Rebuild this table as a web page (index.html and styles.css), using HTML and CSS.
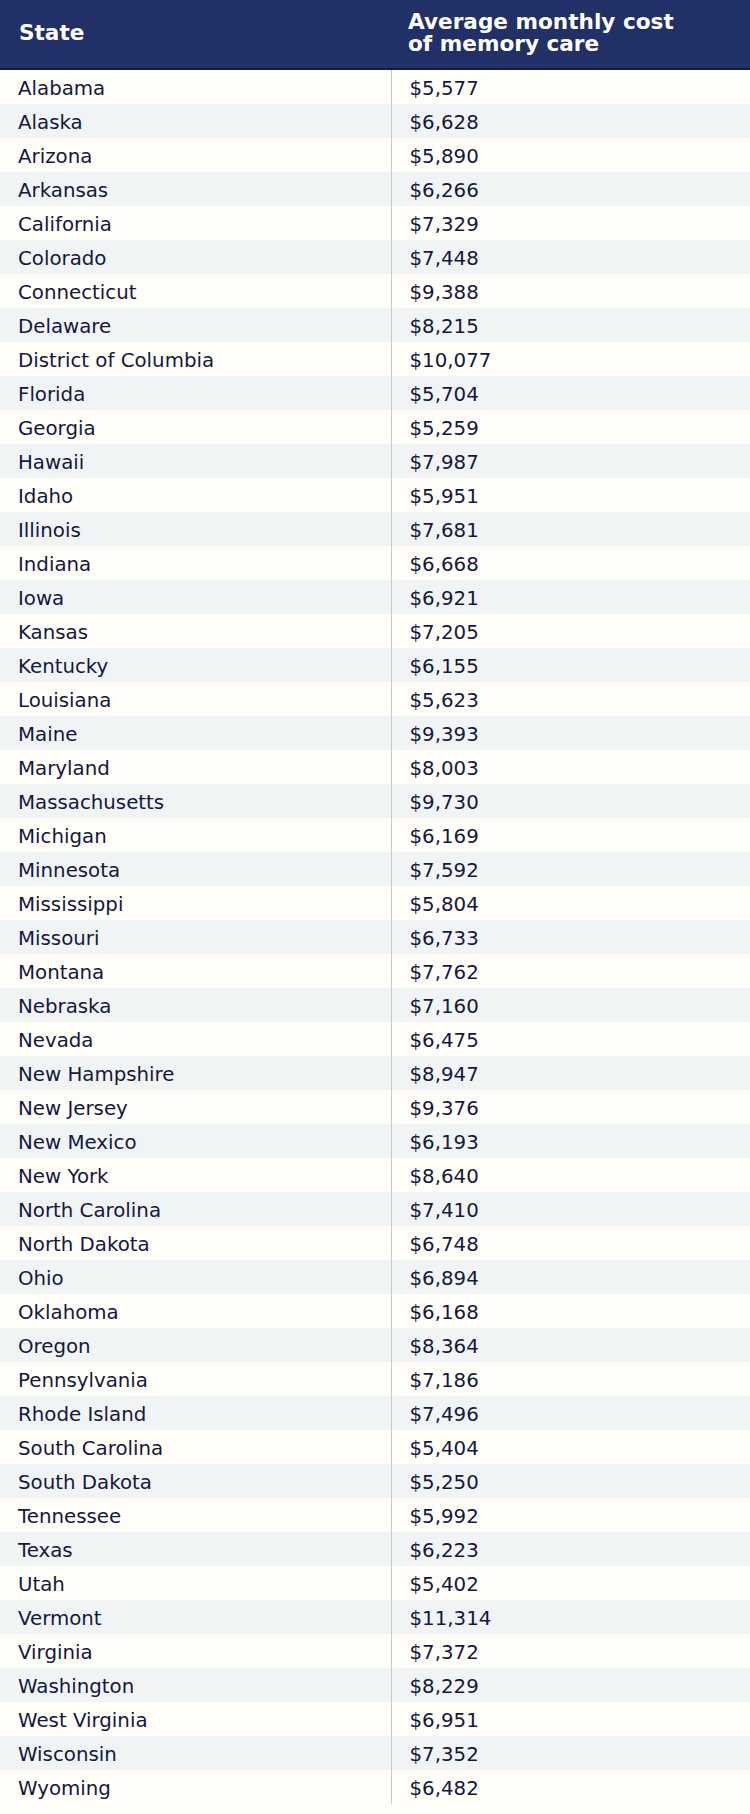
FILE: index.html
```html
<!DOCTYPE html>
<html lang="en">
<head>
<meta charset="utf-8">
<title>Average monthly cost of memory care by state</title>
<link rel="stylesheet" href="styles.css">
</head>
<body>
<table class="cost-table">
  <thead>
    <tr>
      <th class="col-state">State</th>
      <th class="col-cost">Average monthly cost<br>of memory care</th>
    </tr>
  </thead>
  <tbody>
    <tr><td>Alabama</td><td>$5,577</td></tr>
    <tr><td>Alaska</td><td>$6,628</td></tr>
    <tr><td>Arizona</td><td>$5,890</td></tr>
    <tr><td>Arkansas</td><td>$6,266</td></tr>
    <tr><td>California</td><td>$7,329</td></tr>
    <tr><td>Colorado</td><td>$7,448</td></tr>
    <tr><td>Connecticut</td><td>$9,388</td></tr>
    <tr><td>Delaware</td><td>$8,215</td></tr>
    <tr><td>District of Columbia</td><td>$10,077</td></tr>
    <tr><td>Florida</td><td>$5,704</td></tr>
    <tr><td>Georgia</td><td>$5,259</td></tr>
    <tr><td>Hawaii</td><td>$7,987</td></tr>
    <tr><td>Idaho</td><td>$5,951</td></tr>
    <tr><td>Illinois</td><td>$7,681</td></tr>
    <tr><td>Indiana</td><td>$6,668</td></tr>
    <tr><td>Iowa</td><td>$6,921</td></tr>
    <tr><td>Kansas</td><td>$7,205</td></tr>
    <tr><td>Kentucky</td><td>$6,155</td></tr>
    <tr><td>Louisiana</td><td>$5,623</td></tr>
    <tr><td>Maine</td><td>$9,393</td></tr>
    <tr><td>Maryland</td><td>$8,003</td></tr>
    <tr><td>Massachusetts</td><td>$9,730</td></tr>
    <tr><td>Michigan</td><td>$6,169</td></tr>
    <tr><td>Minnesota</td><td>$7,592</td></tr>
    <tr><td>Mississippi</td><td>$5,804</td></tr>
    <tr><td>Missouri</td><td>$6,733</td></tr>
    <tr><td>Montana</td><td>$7,762</td></tr>
    <tr><td>Nebraska</td><td>$7,160</td></tr>
    <tr><td>Nevada</td><td>$6,475</td></tr>
    <tr><td>New Hampshire</td><td>$8,947</td></tr>
    <tr><td>New Jersey</td><td>$9,376</td></tr>
    <tr><td>New Mexico</td><td>$6,193</td></tr>
    <tr><td>New York</td><td>$8,640</td></tr>
    <tr><td>North Carolina</td><td>$7,410</td></tr>
    <tr><td>North Dakota</td><td>$6,748</td></tr>
    <tr><td>Ohio</td><td>$6,894</td></tr>
    <tr><td>Oklahoma</td><td>$6,168</td></tr>
    <tr><td>Oregon</td><td>$8,364</td></tr>
    <tr><td>Pennsylvania</td><td>$7,186</td></tr>
    <tr><td>Rhode Island</td><td>$7,496</td></tr>
    <tr><td>South Carolina</td><td>$5,404</td></tr>
    <tr><td>South Dakota</td><td>$5,250</td></tr>
    <tr><td>Tennessee</td><td>$5,992</td></tr>
    <tr><td>Texas</td><td>$6,223</td></tr>
    <tr><td>Utah</td><td>$5,402</td></tr>
    <tr><td>Vermont</td><td>$11,314</td></tr>
    <tr><td>Virginia</td><td>$7,372</td></tr>
    <tr><td>Washington</td><td>$8,229</td></tr>
    <tr><td>West Virginia</td><td>$6,951</td></tr>
    <tr><td>Wisconsin</td><td>$7,352</td></tr>
    <tr><td>Wyoming</td><td>$6,482</td></tr>
  </tbody>
</table>
</body>
</html>
```

FILE: styles.css
```css
html, body {
  margin: 0;
  padding: 0;
  background: #fefdf8;
}

body {
  font-family: "DejaVu Sans", "Liberation Sans", sans-serif;
  color: #14183f;
}

.cost-table {
  width: 750px;
  border-collapse: collapse;
  border-spacing: 0;
  table-layout: fixed;
}

.cost-table thead th {
  background: #213067;
  color: #ffffff;
  font-weight: bold;
  font-size: 21.6px;
  line-height: 22.4px;
  text-align: left;
  height: 66px;
  padding: 0 18px 2px 18px;
  vertical-align: middle;
  border-bottom: 2px solid #111a45;
}

.cost-table .col-state {
  width: 354px;
  padding-left: 19px;
}

.cost-table .col-cost {
  padding-left: 17px;
}

.cost-table tbody td {
  height: 31px;
  padding: 3px 18px 0 18px;
  font-size: 19.8px;
  line-height: 31px;
  white-space: nowrap;
  vertical-align: middle;
}

.cost-table tbody td:first-child {
  border-right: 1px solid #c9c9c6;
}

.cost-table tbody tr:nth-child(odd) {
  background: #fefdf8;
}

.cost-table tbody tr:nth-child(even) {
  background: #f1f4f4;
}
```
